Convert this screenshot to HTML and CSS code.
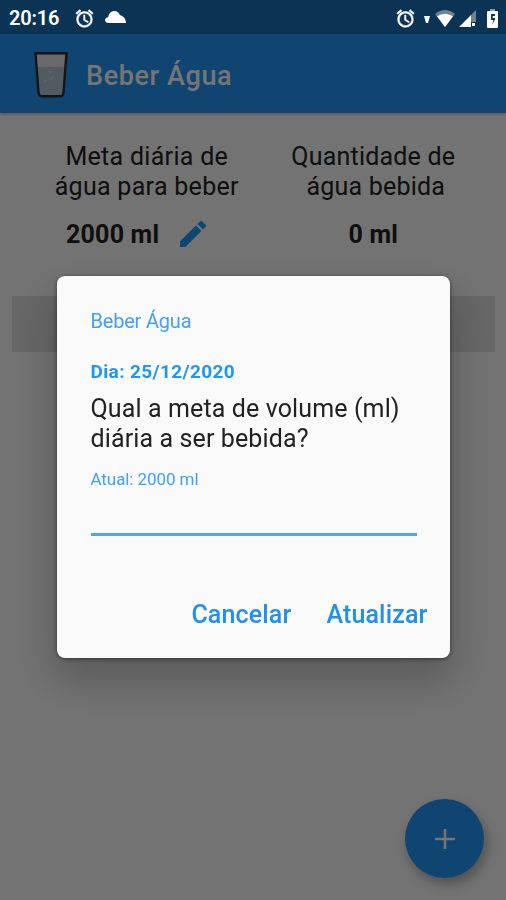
FILE: index.html
```html
<!DOCTYPE html>
<html lang="pt-BR">
<head>
  <meta charset="UTF-8">
  <meta name="viewport" content="width=device-width, initial-scale=1.0">
  <title>Beber Água</title>
  <link rel="stylesheet" href="styles.css">
</head>
<body>

  <div class="status-bar">
    <span class="hora">20:16</span>
    <svg class="alarme" viewBox="0 0 24 24"><path d="M22 5.72l-4.6-3.86-1.29 1.53 4.6 3.86L22 5.72zM7.88 3.39L6.6 1.86 2 5.71l1.29 1.53 4.59-3.85zM12.5 8H11v6l4.75 2.85.75-1.23-4-2.37V8zM12 4c-4.97 0-9 4.03-9 9s4.02 9 9 9a9 9 0 1 0 0-18zm0 16c-3.87 0-7-3.13-7-7s3.13-7 7-7 7 3.13 7 7-3.13 7-7 7z"/></svg>
    <svg class="nuvem" viewBox="0 0 21 12"><path d="M3.500 12C1.500 12 0 10.800 0 9.200 0 7.600 1.300 6.500 3.200 6.200 3.700 2.500 6.200 0 9.300 0c2.900 0 4.700 1.700 5.700 4.300C18.500 5 21 8 21 12z"/></svg>
    <div class="status-direita">
      <svg class="alarme" viewBox="0 0 24 24"><path d="M22 5.72l-4.6-3.86-1.29 1.53 4.6 3.86L22 5.72zM7.88 3.39L6.6 1.86 2 5.71l1.29 1.53 4.59-3.85zM12.5 8H11v6l4.75 2.85.75-1.23-4-2.37V8zM12 4c-4.97 0-9 4.03-9 9s4.02 9 9 9a9 9 0 1 0 0-18zm0 16c-3.87 0-7-3.13-7-7s3.13-7 7-7 7 3.13 7 7-3.13 7-7 7z"/></svg>
      <svg class="seta" viewBox="0 0 6 7"><path d="M0 0h6L4 7H2z"/></svg>
      <svg class="wifi" viewBox="0 0 20 17"><path opacity=".4" d="M0 4Q10-4 20 4L10 17z"/><path d="M2 6.3Q10 1 18 6.3L10 17z"/></svg>
      <svg class="sinal" viewBox="0 0 17 17"><path opacity=".4" d="M17 0v12h-5V5z"/><path d="M0 17L12 5v12zM13 13h3v3h-3z"/></svg>
      <svg class="bateria" viewBox="0 0 11 19"><path opacity=".5" d="M3 0h5v2H3z"/><path fill-rule="evenodd" d="M1 2h9q1 0 1 1v15q0 1-1 1H1q-1 0-1-1V3q0-1 1-1zM4 5v6h2.500L5 16l3-5.500V9H5.700V7H8V5z"/></svg>
    </div>
  </div>

  <header class="barra">
    <svg class="copo" viewBox="0 0 34 46">
      <path fill="#e4e4e4" d="M2 1.500h30l-2.800 39q-.3 4-4.200 4H9q-3.900 0-4.200-4z"/>
      <path fill="#b2c6cf" d="M3 15h28l-2 25q-.3 3.500-4 3.500H9q-3.700 0-4-3.500z"/>
      <path fill="none" stroke="#cddbe1" stroke-width="1.500" d="M9 30l4-2M17 28l2-4M15 20h3"/>
      <path fill="none" stroke="#2c2c30" stroke-width="2.400" stroke-linejoin="round" d="M1.500 1.300h31l-3 39q-.3 4-4.200 4H8.700q-3.900 0-4.200-4z"/>
    </svg>
    <h1>Beber Água</h1>
  </header>

  <main>
    <section class="resumo">
      <div class="coluna">
        <p>Meta diária de<br>água para beber</p>
        <div class="valor meta">
          <strong>2000 ml</strong>
          <svg class="lapis" viewBox="3 3 18 18"><path d="M3 17.250V21h3.750L17.810 9.940l-3.750-3.750L3 17.250zM20.710 7.040a1 1 0 0 0 0-1.410l-2.340-2.340a1 1 0 0 0-1.410 0l-1.830 1.830 3.750 3.750 1.830-1.830z"/></svg>
        </div>
      </div>
      <div class="coluna">
        <p>Quantidade de<br><span class="recuo">água bebida</span></p>
        <div class="valor"><strong>0 ml</strong></div>
      </div>
    </section>
    <div class="historico"></div>
  </main>

  <button class="adicionar" aria-label="Adicionar">
    <svg viewBox="0 0 20 20"><path d="M8.700 0h2.600v8.700H20v2.600h-8.700V20H8.700v-8.700H0V8.700h8.700z"/></svg>
  </button>

  <div class="fundo">
    <form class="dialogo">
      <h2>Beber Água</h2>
      <p class="dia">Dia: 25/12/2020</p>
      <label for="meta">Qual a meta de volume (ml)<br>diária a ser bebida?</label>
      <p class="atual">Atual: 2000 ml</p>
      <input type="text" id="meta">
      <div class="acoes">
        <button type="button" class="cancelar">Cancelar</button>
        <button type="button" class="atualizar">Atualizar</button>
      </div>
    </form>
  </div>

</body>
</html>
```
FILE: styles.css
```css
* {
  box-sizing: border-box;
}

body {
  font-family: Roboto, sans-serif;
  background-color: #fafafa;
  color: #212121;
  height: 900px;
  margin: 0;
  overflow: hidden;
}

h1, h2, p {
  margin: 0;
}

svg {
  display: block;
  flex: none;
}

button {
  font-family: inherit;
  border: none;
  cursor: pointer;
}

/* barra de status, fica acima do fundo escuro */
.status-bar {
  position: relative;
  z-index: 3;
  display: flex;
  align-items: center;
  height: 34px;
  padding: 2px 8px 0 9px;
  background-color: #0b3353;
  color: #fff;
  fill: #fff;
}

.hora {
  width: 65px;
  font-size: 20px;
  font-weight: 600;
  letter-spacing: -0.2px;
}

.alarme {
  width: 21px;
  height: 21px;
  stroke: #fff;
  stroke-width: 0.6px;
}

.nuvem {
  width: 21px;
  height: 12px;
  margin-left: 10px;
  margin-bottom: 2px;
}

.status-direita {
  display: flex;
  align-items: center;
  margin-left: auto;
}

.seta {
  width: 6px;
  height: 7px;
  margin: 3px 5px 0 8px;
}

.wifi {
  width: 20px;
  height: 17px;
}

.sinal {
  width: 17px;
  height: 17px;
  margin: 0 11px 0 4px;
}

.bateria {
  width: 11px;
  height: 19px;
}

.barra {
  display: flex;
  align-items: center;
  height: 79px;
  padding: 2px 0 0 34px;
  background-color: #2196f3;
  box-shadow: 0 1px 3px rgba(0, 0, 0, 0.3);
}

.copo {
  width: 34px;
  height: 46px;
}

h1 {
  margin-left: 18px;
  padding-top: 2px;
  color: #fff;
  font-size: 27px;
  font-weight: 500;
  letter-spacing: 0.6px;
}

.resumo {
  display: flex;
  padding: 29px 26px 0 40px;
  height: 183px;
}

.coluna {
  width: 214px;
  text-align: center;
  font-size: 25px;
  line-height: 30px;
  letter-spacing: 0.2px;
}

.coluna:first-child p {
  letter-spacing: 0.3px;
}

.coluna + .coluna {
  margin-left: 13px;
}

.recuo {
  padding-left: 5px;
}

.valor {
  margin-top: 18px;
}

.valor strong {
  font-weight: 700;
}

.meta {
  display: flex;
  align-items: center;
  padding-left: 26px;
}

.lapis {
  width: 26px;
  height: 26px;
  margin-left: 21px;
  margin-top: -2px;
  fill: #2196f3;
}

.historico {
  height: 56px;
  margin: 0 11px 0 12px;
  background-color: #e0e0e0;
}

.adicionar {
  position: fixed;
  right: 22px;
  bottom: 22px;
  display: flex;
  align-items: center;
  justify-content: center;
  width: 79px;
  height: 79px;
  border-radius: 50%;
  background-color: #2196f3;
  box-shadow: 3px 6px 12px rgba(0, 0, 0, 0.3);
  fill: #fff;
}

.adicionar svg {
  width: 20px;
  height: 20px;
}

.fundo {
  position: fixed;
  inset: 0;
  z-index: 2;
  display: flex;
  align-items: center;
  justify-content: center;
  padding-top: 34px;
  background-color: rgba(0, 0, 0, 0.54);
}

.dialogo {
  width: 393px;
  height: 382px;
  padding: 32px 34px 0;
  border-radius: 8px;
  background-color: #fafafa;
  box-shadow: 0 20px 40px 4px rgba(0, 0, 0, 0.22), 0 1px 4px rgba(0, 0, 0, 0.5);
}

h2 {
  color: #42a0f5;
  font-size: 20px;
  font-weight: 400;
  line-height: 26px;
  letter-spacing: -0.2px;
}

.dia {
  margin-top: 25px;
  color: #2196f3;
  font-size: 19px;
  font-weight: 700;
  line-height: 25px;
  letter-spacing: 0.37px;
}

label {
  display: block;
  margin-top: 10px;
  font-size: 25px;
  line-height: 30px;
  letter-spacing: 0.12px;
  white-space: nowrap;
}

.atual {
  margin-top: 14px;
  color: #42a0f5;
  font-size: 17px;
  line-height: 22px;
  letter-spacing: -0.08px;
}

input {
  display: block;
  width: 326px;
  height: 46px;
  padding: 0;
  border: none;
  border-bottom: 3px solid #56a3e8;
  background: none;
  font-size: 25px;
  outline: none;
}

.acoes {
  display: flex;
  justify-content: flex-end;
  gap: 35px;
  margin: 63px -12px 0 0;
}

.acoes button {
  padding: 0;
  background: none;
  color: #2190e8;
  font-size: 25px;
  font-weight: 500;
  line-height: 32px;
  letter-spacing: 0.15px;
}
```
